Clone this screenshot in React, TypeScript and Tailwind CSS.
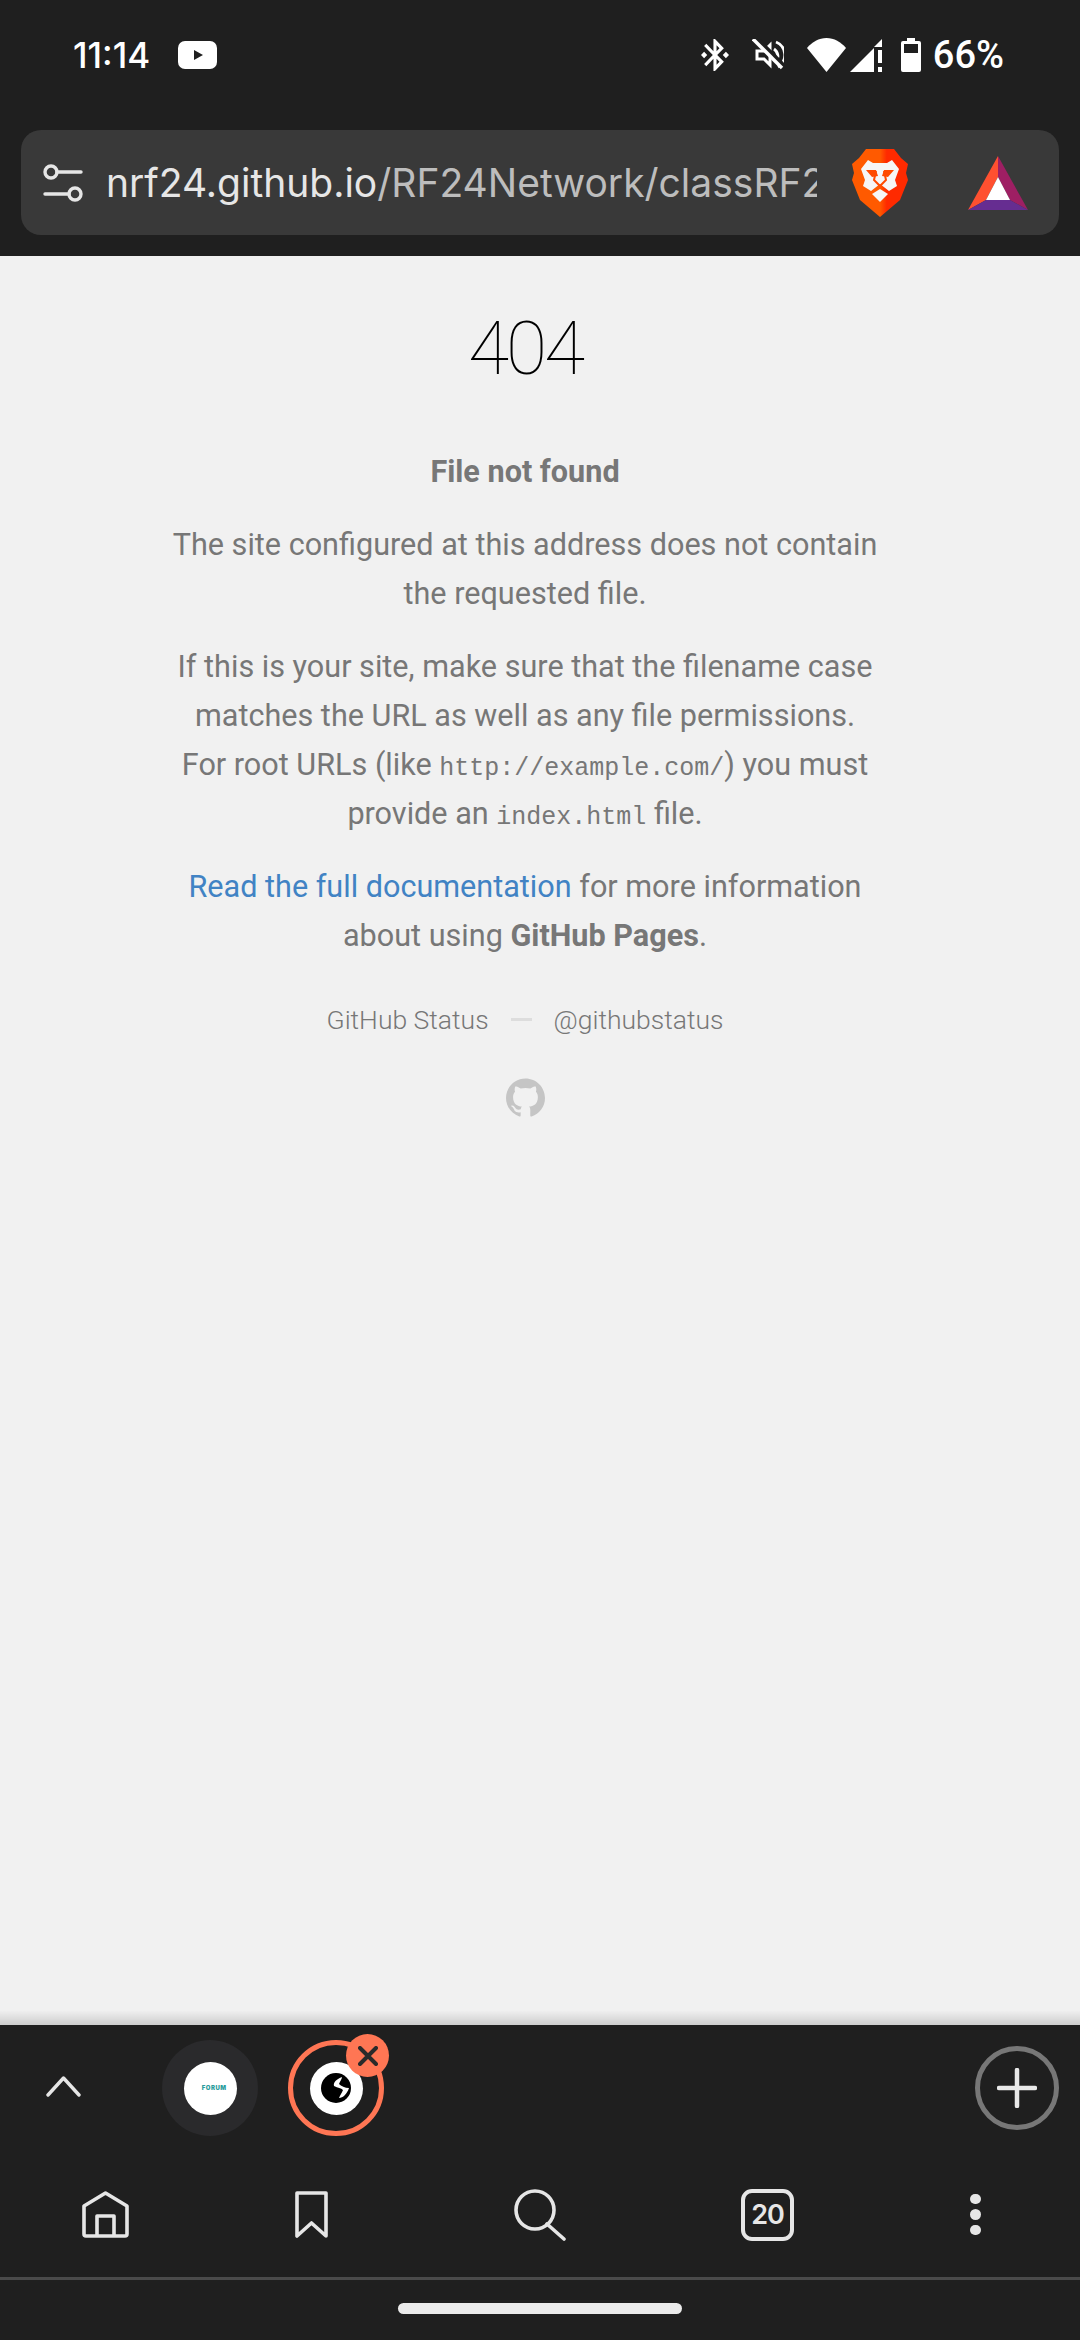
import React from 'react';
import { SiGithub } from 'react-icons/si';

const StatusIcons = () => (
  <div className="ml-auto flex items-center text-white">
    <svg className="w-[28px] h-[32px]" viewBox="3 2 18 20" fill="currentColor" preserveAspectRatio="none">
      <path d="M7 12l-2-2-2 2 2 2 2-2zm10.71-4.29L12 2h-1v7.59L6.41 5 5 6.41 10.59 12 5 17.59 6.41 19 11 14.41V22h1l5.71-5.71-4.3-4.29 4.3-4.29zM13 5.83l1.88 1.88L13 9.59V5.83zm1.88 10.46L13 18.17v-3.76l1.88 1.88zM19 10l-2 2 2 2 2-2-2-2z" />
    </svg>
    <svg className="w-[32px] h-[32px] ml-[23px]" viewBox="0 0 32 32" fill="none" stroke="currentColor" strokeWidth="3">
      <path d="M5 12h7l6-6v20l-6-6H5z" />
      <path d="M22 10a9 9 0 012 13M24 3a14 14 0 012 25" strokeWidth="2.8" />
      <path d="M4 0l29 29" stroke="#1f1f1f" strokeWidth="6" />
      <path d="M1 0l29 29" strokeWidth="3.4" />
    </svg>
    <svg className="w-[39px] h-[34px] ml-[23px]" viewBox="0 0 39 34" fill="currentColor">
      <path d="M19.5 34L0 10C5 4 12 0 19.5 0S34 4 39 10z" />
    </svg>
    <svg className="w-[32px] h-[33px] ml-[4px]" viewBox="0 0 32 33" fill="currentColor">
      <path d="M0 33L24 9v24z" />
      <path d="M24 8L32 0v8zM28 11h4v13h-4zM28 28h4v5h-4z" />
    </svg>
    <svg className="w-[20px] h-[34px] ml-[19px]" viewBox="0 0 20 34" fill="currentColor">
      <path fillRule="evenodd" d="M6 0h8v3h4a2 2 0 012 2v27a2 2 0 01-2 2H2a2 2 0 01-2-2V5a2 2 0 012-2h4zM3 6v9h14V6z" />
    </svg>
    <span className="ml-[12px] text-[38px] leading-[38px] font-medium">66%</span>
  </div>
);

const BraveLogo = () => (
  <svg className="w-[56px] h-[68px]" viewBox="0 0 56 68">
    <defs>
      <linearGradient id="brave" x1="0" x2="1" y1="0" y2="0">
        <stop offset="0" stopColor="#ff5a00" />
        <stop offset="0.5" stopColor="#ff5a00" />
        <stop offset="0.62" stopColor="#ff2a00" />
        <stop offset="1" stopColor="#ff2a00" />
      </linearGradient>
    </defs>
    <path fill="url(#brave)" d="M14 0h28l7 9 7 6-2 9 2 7-8 20-20 17L8 51 0 31l2-7-2-9 7-6z" />
    <path fill="#f6f6f6" d="M9 20l7-9 5 3h14l5-3 7 9-4 11 2 6-8 5-9-7-9 7-8-5 2-6z" />
    <path fill="#ff4a00" d="M14 21h10l2 6-6 1zM42 21H32l-2 6 6 1z" />
    <path fill="none" stroke="#ff4a00" strokeWidth="2" d="M24 22l-2 9 6 6 6-6-2-9" />
    <path fill="#f6f6f6" d="M20 45l8-5 8 5-8 8z" />
  </svg>
);

const BatLogo = () => (
  <svg className="w-[60px] h-[54px]" viewBox="0 0 60 54">
    <path fill="#ff5030" d="M30 0v21L18 44 0 54z" />
    <path fill="#9e1f63" d="M30 0v21l12 23 18 10z" />
    <path fill="#662d91" d="M0 54l18-10h24l18 10z" />
    <path fill="#ffffff" d="M30 21l12 23H18z" />
  </svg>
);

const GlobeIcon = () => (
  <svg className="w-[30px] h-[30px]" viewBox="0 0 30 30">
    <circle cx="15" cy="15" r="15" fill="#000" />
    <path fill="#fff" d="M21 4c-5 2-9 5-8 9 4 2 7 2 9 4-1 3-3 5-4 8 4 0 8-4 10-10-4 0-8-2-10-4 1-3 3-5 3-7z" />
  </svg>
);

export default function App() {
  return (
    <div className="w-[1080px] h-[2340px] flex flex-col bg-[#f1f1f1] overflow-hidden font-['Roboto',sans-serif]">
      {/* status bar and address bar */}
      <div className="bg-[#1f1f1f] pt-[36px] pb-[21px] px-[21px]">
        <div className="flex items-center h-[38px] pl-[52px] pr-[55px]">
          <span className="text-white text-[35px] leading-[38px] font-medium font-['Inter',sans-serif]">11:14</span>
          <svg className="w-[39px] h-[28px] ml-[28px]" viewBox="0 0 39 28">
            <rect width="39" height="28" rx="7" fill="#fff" />
            <path d="M16 9l9 5-9 5z" fill="#1f1f1f" />
          </svg>
          <StatusIcons />
        </div>
        <div className="mt-[56px] h-[105px] bg-[#393939] rounded-[20px] flex items-center pl-[22px]">
          <svg className="w-[40px] h-[40px] shrink-0 text-[#e6e6e6]" viewBox="0 0 40 40" fill="none" stroke="currentColor" strokeWidth="3.4" strokeLinecap="round">
            <circle cx="8" cy="9" r="6" />
            <path d="M14 9h24" />
            <circle cx="32" cy="31" r="6" />
            <path d="M2 31h24" />
          </svg>
          <div className="ml-[23px] w-[711px] shrink-0 overflow-hidden whitespace-nowrap text-[39px] leading-[48px] text-[#bdbdbd] font-['Inter',sans-serif]">
            <span className="text-[#e6e6e6]">nrf24.github.io</span>/RF24Network/classRF24Network.html
          </div>
          <div className="ml-[35px] shrink-0 flex"><BraveLogo /></div>
          <div className="ml-[60px] shrink-0 flex"><BatLogo /></div>
        </div>
      </div>

      {/* 404 page */}
      <div className="flex-1 min-h-0 flex flex-col items-center text-center text-[#777777] text-[30.6px] leading-[49px]">
        <div className="flex flex-col items-center pr-[30px]">
          <h1 className="mt-[47px] text-[75px] leading-[90px] font-thin tracking-[-3px] text-black">404</h1>
          <p className="mt-[54px] font-bold">File not found</p>
          <p className="mt-[24px] w-[708px]">The site configured at this address does not contain the requested file.</p>
          <p className="mt-[24px] w-[708px]">
            If this is your site, make sure that the filename case matches the URL as well as any file permissions. For root URLs (like <code className="font-['Liberation_Mono',monospace] text-[25px] leading-none">http://example.com/</code>) you must provide an <code className="font-['Liberation_Mono',monospace] text-[25px] leading-none">index.html</code> file.
          </p>
          <p className="mt-[24px] w-[708px]">
            <span className="text-[#4183c4]">Read the full documentation</span> for more information about using <strong className="font-bold">GitHub Pages</strong>.
          </p>
          <div className="mt-[42px] flex items-center font-light text-[26.5px] leading-[36px]">
            <span>GitHub Status</span>
            <span className="w-[21px] h-[3px] bg-[#dddddd] mx-[22px] -mt-[2px]" />
            <span>@githubstatus</span>
          </div>
          <SiGithub className="mt-[40px] w-[39px] h-[39px] text-[#c5c5c5]" />
        </div>
        <div className="mt-auto w-full h-[15px] bg-gradient-to-b from-transparent to-black/15" />
      </div>

      {/* tab strip and bottom bar */}
      <div className="bg-[#1f1f1f] shrink-0">
        <div className="h-[145px] pt-[15px] pl-[46px] pr-[21px] flex items-start">
          <div className="h-[93px] flex items-center">
            <svg className="w-[35px] h-[21px] text-[#e6e6e6]" viewBox="0 0 35 21" fill="none" stroke="currentColor" strokeWidth="3.4" strokeLinecap="round" strokeLinejoin="round">
              <path d="M2 19L17.5 2 33 19" />
            </svg>
          </div>
          <div className="ml-[81px] w-[96px] h-[96px] rounded-full bg-[#2a2a2c] flex items-center justify-center">
            <div className="w-[53px] h-[53px] rounded-full bg-white flex items-center justify-end pr-[10px]">
              <span className="text-[6px] leading-none font-black tracking-[0.5px] text-[#2a9d9d] font-['Inter',sans-serif]">FORUM</span>
            </div>
          </div>
          <div className="relative ml-[30px] w-[96px] h-[96px] rounded-full border-[5px] border-[#ff7654] flex items-center justify-center">
            <div className="w-[53px] h-[53px] rounded-full bg-white flex items-center justify-center"><GlobeIcon /></div>
            <div className="absolute -top-[11px] left-[53px] w-[43px] h-[43px] rounded-full bg-[#ff7654] flex items-center justify-center">
              <svg className="w-[20px] h-[20px] text-[#2a2a2a]" viewBox="0 0 20 20" fill="none" stroke="currentColor" strokeWidth="4" strokeLinecap="round">
                <path d="M2 2l16 16M18 2L2 18" />
              </svg>
            </div>
          </div>
          <div className="ml-auto w-[84px] h-[84px] mt-[6px] rounded-full border-[5px] border-[#777777] flex items-center justify-center">
            <svg className="w-[40px] h-[40px] text-[#e8e8e8]" viewBox="0 0 40 40" fill="none" stroke="currentColor" strokeWidth="4.5" strokeLinecap="round">
              <path d="M20 2v36M2 20h36" />
            </svg>
          </div>
        </div>

        <div className="h-[107px] pb-[18px] pl-[82px] flex items-center text-[#e6e6e6]">
          <svg className="w-[47px] h-[47px]" viewBox="0 0 47 47" fill="none" stroke="currentColor" strokeWidth="3.6" strokeLinejoin="round">
            <path d="M23.5 2L2 15v28a2 2 0 002 2h39a2 2 0 002-2V15z" />
            <path d="M15 45V25h17v20" />
          </svg>
          <svg className="w-[33px] h-[47px] ml-[166px]" viewBox="0 0 33 47" fill="none" stroke="currentColor" strokeWidth="3.6" strokeLinejoin="round">
            <path d="M2 2h29v43L16.5 32 2 45z" />
          </svg>
          <svg className="w-[52px] h-[52px] ml-[186px]" viewBox="0 0 52 52" fill="none" stroke="currentColor" strokeWidth="3.6" strokeLinecap="round">
            <circle cx="21" cy="21" r="19" />
            <path d="M33 35l17 15" />
          </svg>
          <div className="ml-[175px] w-[53px] h-[52px] rounded-[11px] border-[4px] border-[#e6e6e6] flex items-center justify-center text-[27px] leading-none font-semibold font-['Inter',sans-serif] tracking-[-1px]">20</div>
          <div className="ml-[176px] flex flex-col gap-[5px]">
            <div className="w-[10.5px] h-[10.5px] rounded-full bg-[#e6e6e6]" />
            <div className="w-[10.5px] h-[10.5px] rounded-full bg-[#e6e6e6]" />
            <div className="w-[10.5px] h-[10.5px] rounded-full bg-[#e6e6e6]" />
          </div>
        </div>

        <div className="h-[3px] bg-[#4a4a4a]" />
        <div className="h-[60px] pt-[23px] flex justify-center">
          <div className="w-[284px] h-[11px] rounded-full bg-[#ebebeb]" />
        </div>
      </div>
    </div>
  );
}
